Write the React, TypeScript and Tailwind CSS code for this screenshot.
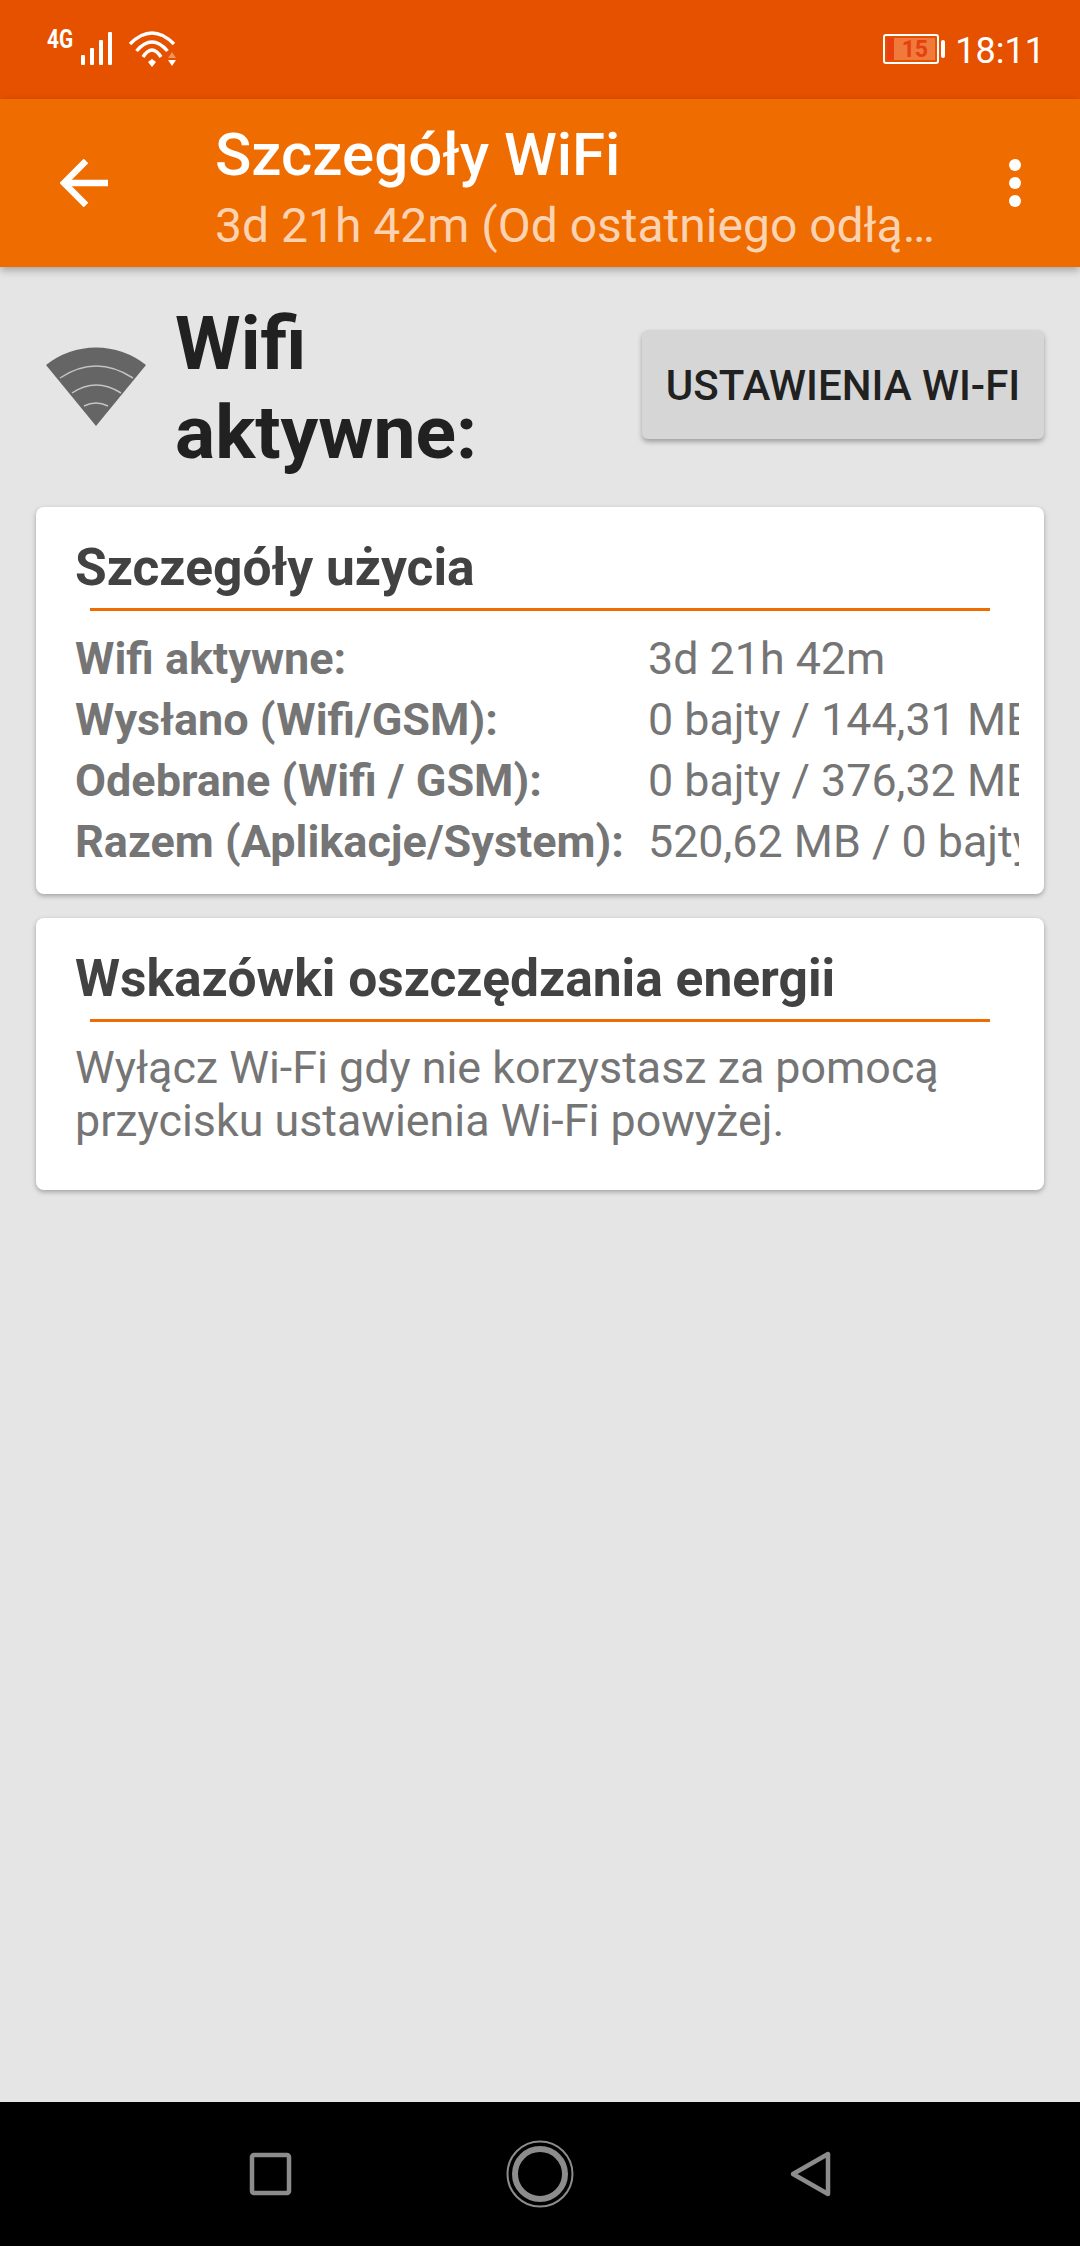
const font = { fontFamily: '"Roboto", "Liberation Sans", sans-serif' };

function StatusLeft() {
  return (
    <div className="relative w-[190px] h-[99px]">
      <span className="absolute left-[47px] top-[27px] text-[26px] leading-[24px] font-bold text-white scale-x-[0.8] origin-left whitespace-nowrap">4G</span>
      <svg className="absolute left-0 top-0" width="190" height="99" viewBox="0 0 190 99" fill="none">
        <g fill="#fff">
          <rect x="81" y="55" width="4" height="10" rx="1" />
          <rect x="90" y="48" width="4" height="17" rx="1" />
          <rect x="99" y="40" width="4" height="25" rx="1" />
          <rect x="108" y="32" width="4" height="33" rx="1" />
        </g>
        <g stroke="#fff" strokeWidth="3.4" fill="none">
          <path d="M130 44 Q152 22 174 44" />
          <path d="M136.500 51 Q152 33 167.500 51" />
          <path d="M143 57 Q152 43 161 57" />
        </g>
        <path d="M148 62 L152 59 L156 62 L152 67 Z" fill="#fff" />
        <path d="M172 52 L176 58 L168 58 Z" fill="#f0935c" />
        <path d="M168 60 L176 60 L172 66 Z" fill="#fff" />
      </svg>
    </div>
  );
}

function Battery() {
  return (
    <div className="flex items-center gap-[2px] mb-[1px]">
      <div className="relative w-[56px] h-[30px] rounded-[3px] border-[2px] border-white flex items-stretch p-[2px] overflow-hidden">
        <div className="w-[7px] bg-[#e8400f]" />
        <div className="flex-1 bg-[#ef7a3a] flex items-center justify-center text-[23px] leading-none font-bold text-[#e6400f]">15</div>
      </div>
      <div className="w-[4px] h-[18px] rounded-[2px] bg-white" />
    </div>
  );
}

function BigWifi() {
  return (
    <svg width="102" height="82" viewBox="0 0 102 82" className="shrink-0 mb-[3px]">
      <path d="M51 81 L1 20 A80 80 0 0 1 101 20 Z" fill="#656565" />
      <g stroke="#c4c4c4" strokeWidth="1.5" fill="none">
        <path d="M15 33 Q51 9 88 33" />
        <path d="M27 48 Q51 32 76 48" />
        <path d="M39 61 Q51 55 63 61" />
      </g>
    </svg>
  );
}

const rows = [
  ["Wifi aktywne:", "3d 21h 42m"],
  ["Wysłano (Wifi/GSM):", "0 bajty / 144,31 MB"],
  ["Odebrane (Wifi / GSM):", "0 bajty / 376,32 MB"],
  ["Razem (Aplikacje/System):", "520,62 MB / 0 bajty"],
];

export default function App() {
  return (
    <div className="w-[1080px] h-[2246px] bg-[#e5e5e5] flex flex-col overflow-hidden" style={font}>
      <div className="h-[99px] bg-[#e65100] flex items-center justify-between shrink-0">
        <StatusLeft />
        <div className="flex items-center gap-[10px] pr-[35px]">
          <Battery />
          <span className="text-[36px] leading-none text-white mt-[2px]">18:11</span>
        </div>
      </div>

      <div className="relative z-10 h-[168px] bg-[#ef6c00] flex items-center shrink-0 shadow-[0_3px_8px_rgba(0,0,0,0.3)]">
        <div className="w-[215px] pl-[60px] shrink-0">
          <svg width="48" height="48" viewBox="0 0 48 48" fill="none" stroke="#fff" strokeWidth="6.5" strokeLinecap="butt">
            <path d="M48 24 H4" />
            <path d="M26 2 L4 24 L26 46" />
          </svg>
        </div>
        <div className="flex-1 min-w-0 self-start mt-[21px]">
          <div className="text-[60px] leading-[70px] font-medium text-white whitespace-nowrap">Szczegóły WiFi</div>
          <div className="mt-[7px] w-[726px] text-[48px] leading-[58px] text-[#fbd3b3] truncate">3d 21h 42m (Od ostatniego odłączenia)</div>
        </div>
        <div className="w-[18px] mr-[56px] flex flex-col gap-[6px] shrink-0 items-center">
          <div className="w-[12px] h-[12px] rounded-full bg-white" />
          <div className="w-[12px] h-[12px] rounded-full bg-white" />
          <div className="w-[12px] h-[12px] rounded-full bg-white" />
        </div>
      </div>

      <div className="flex-1 flex flex-col">
        <div className="h-[240px] flex items-center pl-[45px] pr-[36px] shrink-0">
          <BigWifi />
          <div className="ml-[28px] mt-[1px] text-[75px] leading-[89px] font-bold text-[#212121] w-[400px]">
            <div>Wifi</div>
            <div>aktywne:</div>
          </div>
          <button className="ml-auto mb-[6px] pt-[2px] w-[402px] h-[109px] rounded-[6px] bg-[#d6d6d6] text-[42px] font-medium text-[#212121] shadow-[0_3px_5px_rgba(0,0,0,0.3)] whitespace-nowrap">
            USTAWIENIA WI-FI
          </button>
        </div>

        <div className="mx-[36px] h-[387px] bg-white rounded-[8px] shadow-[0_2px_5px_rgba(0,0,0,0.3)] pl-[39px] pr-[25px] pt-[31px] shrink-0">
          <div className="text-[51.5px] leading-[60px] font-bold text-[#424242]">Szczegóły użycia</div>
          <div className="ml-[15px] mr-[29px] h-[3px] mt-[10px] bg-[#ef6c00]" />
          <div className="mt-[17px] flex flex-col">
            {rows.map(([k, v]) => (
              <div key={k} className="flex h-[61px] items-center leading-[61px] text-[#757575]">
                <div className="w-[573px] shrink-0 font-bold whitespace-nowrap text-[45px]">{k}</div>
                <div className="flex-1 min-w-0 overflow-hidden whitespace-nowrap text-[44.8px]">{v}</div>
              </div>
            ))}
          </div>
        </div>

        <div className="mx-[36px] mt-[24px] h-[272px] bg-white rounded-[8px] shadow-[0_2px_5px_rgba(0,0,0,0.3)] pl-[39px] pr-[25px] pt-[31px] shrink-0">
          <div className="text-[51.5px] leading-[60px] font-bold text-[#424242]">Wskazówki oszczędzania energii</div>
          <div className="ml-[15px] mr-[29px] h-[3px] mt-[10px] bg-[#ef6c00]" />
          <div className="mt-[19px] text-[44.8px] leading-[53px] text-[#757575]">
            <div>Wyłącz Wi-Fi gdy nie korzystasz za pomocą</div>
            <div>przycisku ustawienia Wi-Fi powyżej.</div>
          </div>
        </div>
      </div>

      <div className="h-[144px] bg-black shrink-0 flex items-center justify-center">
        <svg width="1080" height="144" viewBox="0 0 1080 144" fill="none" stroke="#8c8c8c">
          <rect x="252" y="53" width="37" height="38" rx="2" strokeWidth="4.5" />
          <circle cx="540" cy="72" r="32.500" strokeWidth="2" />
          <circle cx="540" cy="72" r="25" strokeWidth="6" />
          <path d="M828 52 V92 L793 72 Z" strokeWidth="4.500" strokeLinejoin="round" />
        </svg>
      </div>
    </div>
  );
}
